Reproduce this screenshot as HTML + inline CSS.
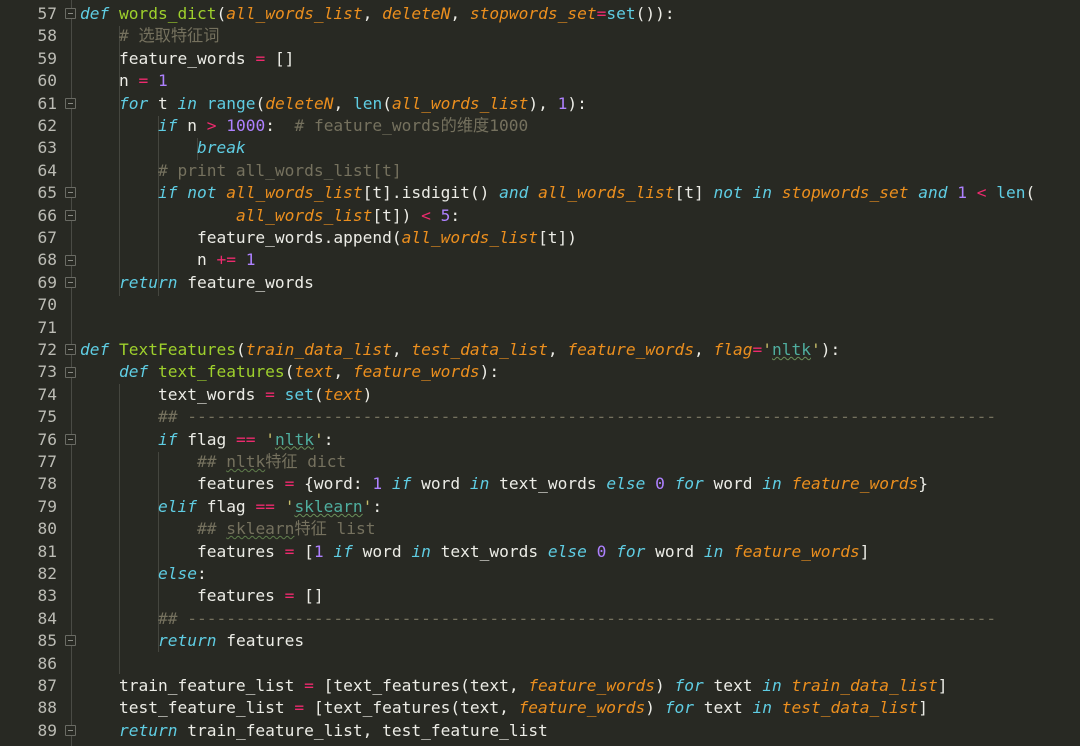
<!DOCTYPE html>
<html><head><meta charset="utf-8"><style>
html,body{margin:0;padding:0;background:#282923;width:1080px;height:746px;overflow:hidden}
#w{position:relative;width:1080px;height:746px;font-family:"DejaVu Sans Mono","Liberation Mono","Noto Sans CJK SC",monospace;font-size:16.2px;color:#ecece6}
.ln{position:absolute;left:0;width:57px;text-align:right;color:#bcbcb5}
.cd{position:absolute;left:80px;white-space:pre}
.row{position:absolute;height:22.4px;line-height:22.4px}
.k{color:#5fcde3;font-style:italic}
.b{color:#5fcde3}
.f{color:#9ed02c}
.p{color:#ec8f1e;font-style:italic}
.o{color:#ee2a6e}
.n{color:#ae81ff}
.c{color:#75715e}
.s{color:#4fae9f;text-decoration:underline wavy #6b8f5a;text-decoration-thickness:1px}
.q{color:#c7bd6a}
.u{text-decoration:underline wavy #5f7d4c;text-decoration-thickness:1px}
.g{position:absolute;left:71px;top:0;width:1px;height:746px;background:#4a4b45}
.ig{position:absolute;width:1px;background:#45463f}
.fd{position:absolute;left:65px;width:11px;height:11px;border:1px solid #6a6b64;background:#282923;box-sizing:border-box;border-radius:1px}
.fd:after{content:"";position:absolute;left:2px;top:4px;width:5px;height:1px;background:#8a8b84}
</style></head><body><div id="w">
<div class="g"></div>
<div class="ig" style="left:119px;top:26px;height:270px"></div>
<div class="ig" style="left:158px;top:116px;height:180px"></div>
<div class="ig" style="left:197px;top:138px;height:22px"></div>
<div class="ig" style="left:119px;top:384px;height:290px"></div>
<div class="ig" style="left:158px;top:452px;height:200px"></div>
<div class="fd" style="top:8px"></div>
<div class="fd" style="top:98px"></div>
<div class="fd" style="top:187px"></div>
<div class="fd" style="top:210px"></div>
<div class="fd" style="top:255px"></div>
<div class="fd" style="top:277px"></div>
<div class="fd" style="top:344px"></div>
<div class="fd" style="top:367px"></div>
<div class="fd" style="top:434px"></div>
<div class="fd" style="top:635px"></div>
<div class="fd" style="top:725px"></div>
<div id="rows"></div>
<script>
var L=[
'<span class="k">def</span> <span class="f">words_dict</span>(<span class="p">all_words_list</span>, <span class="p">deleteN</span>, <span class="p">stopwords_set</span><span class="o">=</span><span class="b">set</span>()):',
'    <span class="c"># 选取特征词</span>',
'    feature_words <span class="o">=</span> []',
'    n <span class="o">=</span> <span class="n">1</span>',
'    <span class="k">for</span> t <span class="k">in</span> <span class="b">range</span>(<span class="p">deleteN</span>, <span class="b">len</span>(<span class="p">all_words_list</span>), <span class="n">1</span>):',
'        <span class="k">if</span> n <span class="o">&gt;</span> <span class="n">1000</span>:  <span class="c"># feature_words的维度1000</span>',
'            <span class="k">break</span>',
'        <span class="c"># print all_words_list[t]</span>',
'        <span class="k">if not</span> <span class="p">all_words_list</span>[t].isdigit() <span class="k">and</span> <span class="p">all_words_list</span>[t] <span class="k">not in</span> <span class="p">stopwords_set</span> <span class="k">and</span> <span class="n">1</span> <span class="o">&lt;</span> <span class="b">len</span>(',
'                <span class="p">all_words_list</span>[t]) <span class="o">&lt;</span> <span class="n">5</span>:',
'            feature_words.append(<span class="p">all_words_list</span>[t])',
'            n <span class="o">+=</span> <span class="n">1</span>',
'    <span class="k">return</span> feature_words',
'',
'',
'<span class="k">def</span> <span class="f">TextFeatures</span>(<span class="p">train_data_list</span>, <span class="p">test_data_list</span>, <span class="p">feature_words</span>, <span class="p">flag</span><span class="o">=</span><span class="q">\'</span><span class="s">nltk</span><span class="q">\'</span>):',
'    <span class="k">def</span> <span class="f">text_features</span>(<span class="p">text</span>, <span class="p">feature_words</span>):',
'        text_words <span class="o">=</span> <span class="b">set</span>(<span class="p">text</span>)',
'        <span class="c">## -----------------------------------------------------------------------------------</span>',
'        <span class="k">if</span> flag <span class="o">==</span> <span class="q">\'</span><span class="s">nltk</span><span class="q">\'</span>:',
'            <span class="c">## <span class="u">nltk</span>特征 dict</span>',
'            features <span class="o">=</span> {word: <span class="n">1</span> <span class="k">if</span> word <span class="k">in</span> text_words <span class="k">else</span> <span class="n">0</span> <span class="k">for</span> word <span class="k">in</span> <span class="p">feature_words</span>}',
'        <span class="k">elif</span> flag <span class="o">==</span> <span class="q">\'</span><span class="s">sklearn</span><span class="q">\'</span>:',
'            <span class="c">## <span class="u">sklearn</span>特征 list</span>',
'            features <span class="o">=</span> [<span class="n">1</span> <span class="k">if</span> word <span class="k">in</span> text_words <span class="k">else</span> <span class="n">0</span> <span class="k">for</span> word <span class="k">in</span> <span class="p">feature_words</span>]',
'        <span class="k">else</span>:',
'            features <span class="o">=</span> []',
'        <span class="c">## -----------------------------------------------------------------------------------</span>',
'        <span class="k">return</span> features',
'',
'    train_feature_list <span class="o">=</span> [text_features(text, <span class="p">feature_words</span>) <span class="k">for</span> text <span class="k">in</span> <span class="p">train_data_list</span>]',
'    test_feature_list <span class="o">=</span> [text_features(text, <span class="p">feature_words</span>) <span class="k">for</span> text <span class="k">in</span> <span class="p">test_data_list</span>]',
'    <span class="k">return</span> train_feature_list, test_feature_list'
];
var h='';
for(var i=0;i<L.length;i++){var t=3+i*22.4;
h+='<div class="row ln" style="top:'+t+'px">'+(57+i)+'</div><div class="row cd" style="top:'+t+'px">'+L[i]+'</div>';}
document.getElementById('rows').innerHTML=h;
</script>
</div></body></html>
